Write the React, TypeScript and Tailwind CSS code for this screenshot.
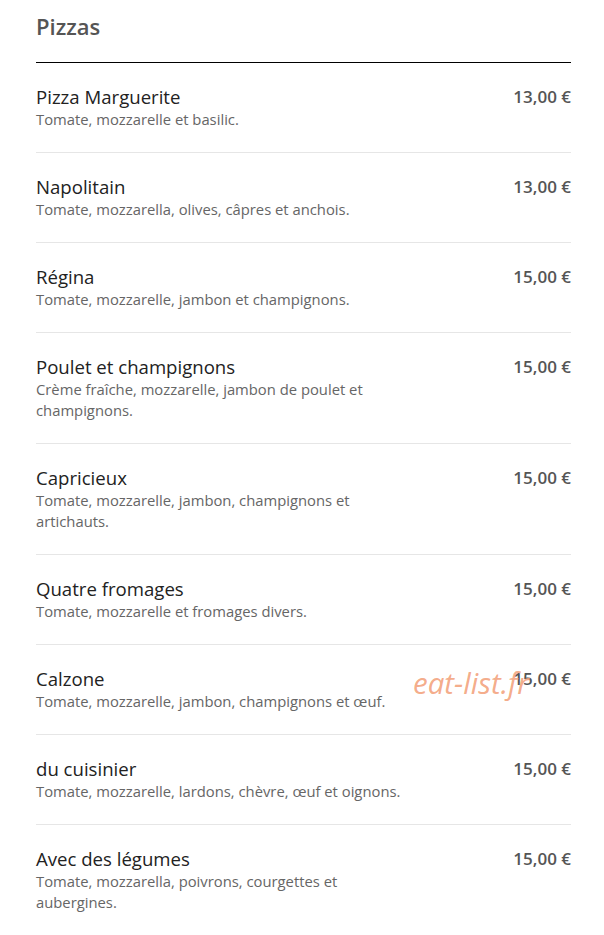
const pizzas = [
  { name: 'Pizza Marguerite', desc: 'Tomate, mozzarelle et basilic.', price: '13,00 €' },
  { name: 'Napolitain', desc: 'Tomate, mozzarella, olives, câpres et anchois.', price: '13,00 €' },
  { name: 'Régina', desc: 'Tomate, mozzarelle, jambon et champignons.', price: '15,00 €' },
  {
    name: 'Poulet et champignons',
    desc: 'Crème fraîche, mozzarelle, jambon de poulet et champignons.',
    price: '15,00 €',
  },
  { name: 'Capricieux', desc: 'Tomate, mozzarelle, jambon, champignons et artichauts.', price: '15,00 €' },
  { name: 'Quatre fromages', desc: 'Tomate, mozzarelle et fromages divers.', price: '15,00 €' },
  { name: 'Calzone', desc: 'Tomate, mozzarelle, jambon, champignons et œuf.', price: '15,00 €' },
  { name: 'du cuisinier', desc: 'Tomate, mozzarelle, lardons, chèvre, œuf et oignons.', price: '15,00 €' },
  { name: 'Avec des légumes', desc: 'Tomate, mozzarella, poivrons, courgettes et aubergines.', price: '15,00 €' },
];

export default function App() {
  return (
    <div className="relative min-h-[935px] w-[604px] bg-white pl-[36px] pr-[33px] pt-[11px] font-['Open_Sans',sans-serif]">
      <h2 className="border-b border-black pb-[21px] text-[22px] leading-[30px] font-semibold text-[#555]">
        Pizzas
      </h2>
      <ul>
        {pizzas.map((pizza, index) => (
          <li
            key={index}
            className={
              'flex justify-between pt-[22px] pb-[22px] ' +
              (index < pizzas.length - 1 ? 'border-b border-[#e6e6e6]' : '')
            }
          >
            <div className="w-[366px]">
              <div className="text-[18.6px] leading-[24px] text-[#222]">{pizza.name}</div>
              <div className="text-[14.8px] leading-[21px] text-[#666]">{pizza.desc}</div>
            </div>
            <div className="text-[17px] leading-[24px] font-semibold text-[#555]">{pizza.price}</div>
          </li>
        ))}
      </ul>
      <span className="absolute top-[663px] left-[413px] text-[29.5px] leading-[40px] italic text-[#f3a27c]/90">
        eat-list.fr
      </span>
    </div>
  );
}
